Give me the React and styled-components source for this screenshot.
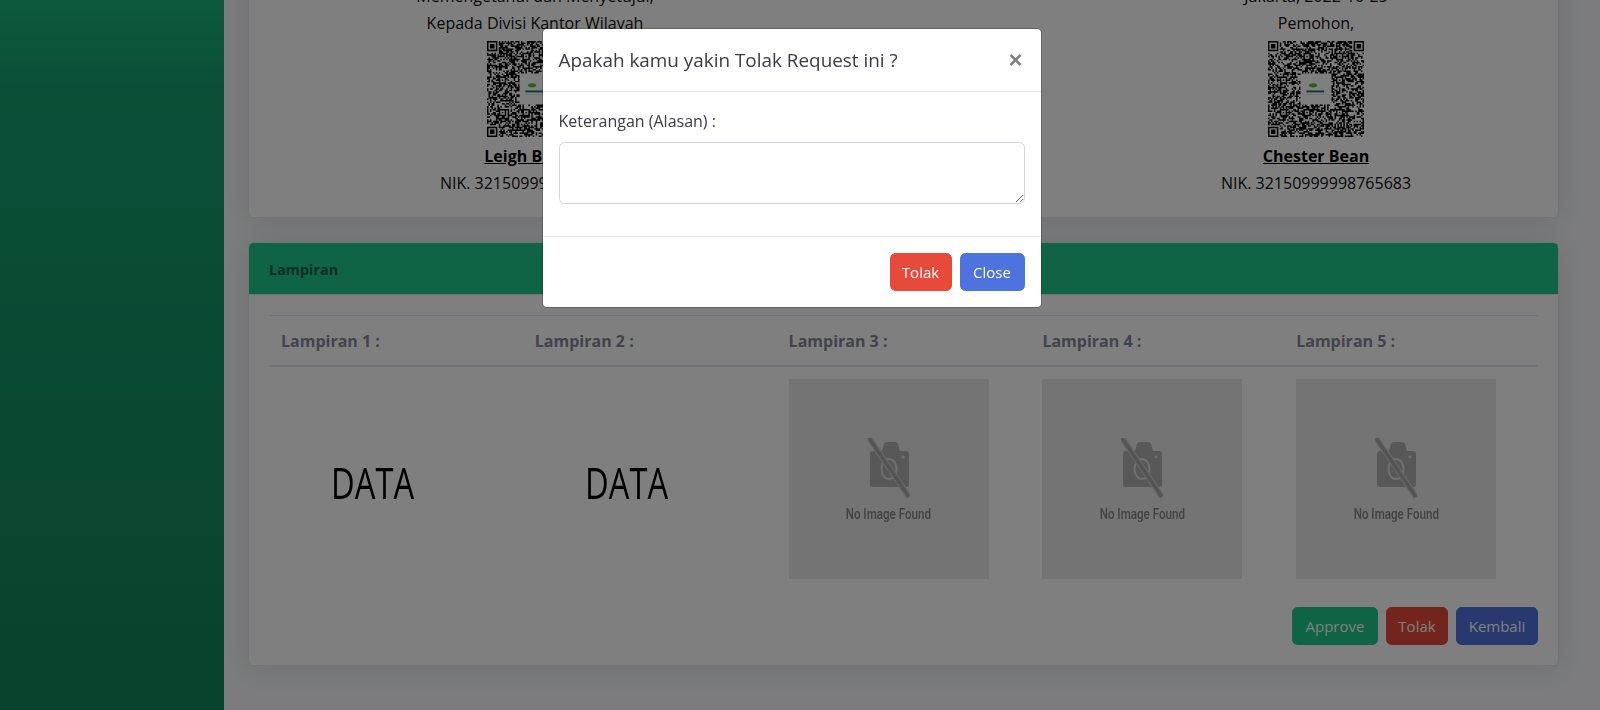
import React from "react";
import styled, { createGlobalStyle } from "styled-components";

const Global = createGlobalStyle`
  html, body { margin: 0; padding: 0; height: 710px; overflow: hidden; background: #f8f9fc; }
  body { font-family: "Open Sans", "Liberation Sans", sans-serif; font-size: 16px; color: #858796; }
  * { box-sizing: border-box; }
`;

const Page = styled.div`
  display: flex;
  height: 710px;
  padding-right: 17px;
  overflow: hidden;
`;
const Sidebar = styled.aside`
  flex: 0 0 224px;
  background-color: #18a974;
  background-image: linear-gradient(180deg, #18b47c 0%, #179f70 12%, #13845a 100%);
`;
const Content = styled.main`
  flex: 1;
  min-width: 0;
  padding: 0 24px;
  overflow: hidden;
`;
const Card = styled.section`
  background: #fff;
  border: 1px solid #e3e6f0;
  border-radius: 5.6px;
  box-shadow: 0 2.4px 28px 0 rgba(58, 59, 69, 0.15);
  margin-top: ${(p) => p.$top}px;
  overflow: hidden;
`;
const SignBody = styled.div`
  display: grid;
  grid-template-columns: 532px 1fr 444px;
  padding: 20px;
`;
const SignCol = styled.div`
  grid-column: ${(p) => p.$col};
  display: flex;
  flex-direction: column;
  align-items: center;
  color: #111;
`;
const Line = styled.div`
  line-height: 27px;
  white-space: nowrap;
`;
const SignName = styled(Line)`
  margin-top: 6px;
  font-weight: 700;
  color: #000;
  text-decoration: underline;
`;
const QrFrame = styled.svg`
  display: block;
  width: 96px;
  height: 96px;
  margin-top: 4px;
`;
const CardHeader = styled.header`
  height: 52px;
  display: flex;
  align-items: center;
  padding: 2px 20px 0;
  background: #1cc88a;
  border-bottom: 1px solid #e3e6f0;
`;
const HeaderTitle = styled.h6`
  margin: 0;
  font-size: 14.4px;
  font-weight: 700;
  color: #255a4e;
`;
const CardBody = styled.div`
  padding: 20px;
`;
const Table = styled.table`
  width: 100%;
  table-layout: fixed;
  border-collapse: separate;
  border-spacing: 0;
`;
const Th = styled.th`
  text-align: left;
  padding: 13px 12px 11px;
  line-height: 25px;
  font-weight: 700;
  font-size: 16px;
  color: #858796;
  border-top: 1px solid #e3e6f0;
  border-bottom: 2px solid #e3e6f0;
`;
const Td = styled.td`
  padding: 12px;
  vertical-align: top;
`;
const DataBox = styled.div`
  width: 200px;
  height: 200px;
  display: flex;
  align-items: center;
  justify-content: center;
  padding: 6px 16px 0 0;
  color: #000;
  background: #fff;
`;
const DataText = styled.span`
  font-size: 43px;
  line-height: 1;
  transform: scaleX(0.76);
`;
const NoImage = styled.div`
  width: 200px;
  height: 200px;
  display: flex;
  flex-direction: column;
  align-items: center;
  padding-top: 59px;
  background: #e8e8e8;
`;
const NoImageText = styled.span`
  margin-top: 8px;
  font-family: Roboto, "Liberation Sans", sans-serif;
  font-size: 14.5px;
  font-weight: 500;
  line-height: 17px;
  color: #858585;
  transform: scaleX(0.8);
  white-space: nowrap;
  filter: blur(0.3px);
`;
const Actions = styled.div`
  display: flex;
  justify-content: flex-end;
  gap: 8px;
  margin-top: 16px;
`;
const Button = styled.button`
  height: 38px;
  width: ${(p) => p.$w}px;
  padding: 0;
  font: inherit;
  font-size: 15px;
  line-height: 36px;
  color: #fff;
  background: ${(p) => p.$bg};
  border: 1px solid ${(p) => p.$bg};
  border-radius: 5.6px;
`;
const Backdrop = styled.div`
  position: fixed;
  inset: 0;
  background: rgba(0, 0, 0, 0.5);
`;
const Modal = styled.div`
  position: fixed;
  top: 28px;
  left: 541.5px;
  width: 500px;
  background: #fff;
  border: 1px solid rgba(0, 0, 0, 0.2);
  background-clip: padding-box;
  border-radius: 4.8px;
`;
const ModalHeader = styled.div`
  display: flex;
  justify-content: space-between;
  align-items: flex-start;
  padding: 16px;
  border-bottom: 1px solid #e3e6f0;
`;
const ModalTitle = styled.h5`
  margin: 0;
  font-size: 18.9px;
  font-weight: 400;
  line-height: 30px;
  color: #3a3b45;
`;
const CloseX = styled.button`
  padding: 0 2px 0 4px;
  margin: 1px 0 0;
  background: none;
  border: 0;
  font-family: "Liberation Sans", sans-serif;
  font-size: 24px;
  font-weight: 700;
  line-height: 28px;
  color: #000;
  opacity: 0.5;
`;
const ModalBody = styled.div`
  padding: 17px 16px 32px;
`;
const Label = styled.label`
  display: block;
  line-height: 24px;
  margin-bottom: 9px;
  color: #3a3b45;
`;
const TextArea = styled.textarea`
  display: block;
  width: 100%;
  height: 62px;
  padding: 6px 12px;
  border: 1px solid #d1d3e2;
  border-radius: 5.6px;
  background: #fff;
  font: inherit;
  outline: none;
`;
const ModalFooter = styled.div`
  display: flex;
  justify-content: flex-end;
  gap: 8px;
  padding: 16px;
  border-top: 1px solid #e3e6f0;
`;

function qrPath(seed) {
  const n = 65;
  const aligns = [[46, 24], [46, 46], [24, 8], [8, 24], [46, 8], [8, 46], [24, 46]];
  let s = seed;
  const rnd = () => {
    s = (s * 1664525 + 1013904223) >>> 0;
    return (s >>> 16) / 65536;
  };
  let d = "";
  const inFinder = (x, y) =>
    (x < 8 && y < 8) || (x >= n - 8 && y < 8) || (x < 8 && y >= n - 8);
  const inCenter = (x, y) => x >= 22 && x < 43 && y >= 22 && y < 43;
  const inAlign = (x, y) =>
    aligns.some(([a, b]) => x >= a && x < a + 5 && y >= b && y < b + 5);
  for (let y = 0; y < n; y++) {
    for (let x = 0; x < n; x++) {
      const v = rnd();
      if (inFinder(x, y) || inCenter(x, y) || inAlign(x, y)) continue;
      if (v > 0.48) d += `M${x} ${y}h1v1h-1z`;
    }
  }
  for (const [x, y] of [[0, 0], [n - 7, 0], [0, n - 7]]) {
    d += `M${x} ${y}h7v7h-7zM${x + 1} ${y + 1}v5h5v-5zM${x + 2} ${y + 2}h3v3h-3z`;
  }
  for (const [x, y] of aligns) {
    d += `M${x} ${y}h5v5h-5zM${x + 1} ${y + 1}v3h3v-3zM${x + 2} ${y + 2}h1v1h-1z`;
  }
  return d;
}

function Qr({ seed }) {
  return (
    <QrFrame viewBox="0 0 65 65" aria-hidden="true">
      <rect width="65" height="65" fill="#fff" />
      <path d={qrPath(seed)} fill="#000" fillRule="evenodd" />
      <ellipse cx="30.500" cy="30" rx="2.800" ry="1.400" fill="#5dbb3a" />
      <rect x="26" y="33.500" width="12" height="1.300" fill="#1c6f6a" />
      <rect x="26" y="36" width="12" height="0.400" fill="#cfe0cf" />
    </QrFrame>
  );
}

function NoImageIcon() {
  return (
    <svg width="42" height="60" viewBox="0 0 42 60" aria-hidden="true">
      <path
        d="M5 13h9l2-7q.6-2 3-2h8q2.400 0 3 2l2 7h6q3 0 3 3v30q0 3-3 3H5q-3 0-3-3V16q0-3 3-3z"
        fill="#b0b0b0"
      />
      <ellipse cx="21" cy="31" rx="7.500" ry="10" fill="none" stroke="#e0e0e0" strokeWidth="2" />
      <circle cx="35" cy="19" r="1.600" fill="#e0e0e0" />
      <line x1="1" y1="0" x2="41" y2="59" stroke="#d0d0d0" strokeWidth="6" />
      <line x1="1" y1="0" x2="41" y2="59" stroke="#a8a8a8" strokeWidth="3.500" />
    </svg>
  );
}

const heads = ["Lampiran 1 :", "Lampiran 2 :", "Lampiran 3 :", "Lampiran 4 :", "Lampiran 5 :"];

export default function App() {
  return (
    <>
      <Global />
      <Page>
        <Sidebar />
        <Content>
          <Card $top={-38}>
            <SignBody>
              <SignCol $col={1}>
                <Line>Memengetahui dan Menyetujui,</Line>
                <Line>Kepada Divisi Kantor Wilayah</Line>
                <Qr seed={77} />
                <SignName>Leigh Bowen</SignName>
                <Line>NIK. 32150999998765683</Line>
              </SignCol>
              <SignCol $col={3}>
                <Line>Jakarta, 2022-10-25</Line>
                <Line>Pemohon,</Line>
                <Qr seed={4242} />
                <SignName>Chester Bean</SignName>
                <Line>NIK. 32150999998765683</Line>
              </SignCol>
            </SignBody>
          </Card>
          <Card $top={24}>
            <CardHeader>
              <HeaderTitle>Lampiran</HeaderTitle>
            </CardHeader>
            <CardBody>
              <Table>
                <thead>
                  <tr>
                    {heads.map((h) => (
                      <Th key={h}>{h}</Th>
                    ))}
                  </tr>
                </thead>
                <tbody>
                  <tr>
                    {[0, 1].map((i) => (
                      <Td key={i}>
                        <DataBox>
                          <DataText>DATA</DataText>
                        </DataBox>
                      </Td>
                    ))}
                    {[0, 1, 2].map((i) => (
                      <Td key={i}>
                        <NoImage>
                          <NoImageIcon />
                          <NoImageText>No Image Found</NoImageText>
                        </NoImage>
                      </Td>
                    ))}
                  </tr>
                </tbody>
              </Table>
              <Actions>
                <Button $w={86} $bg="#1cc88a">Approve</Button>
                <Button $w={62} $bg="#e74a3b">Tolak</Button>
                <Button $w={82} $bg="#4e73df">Kembali</Button>
              </Actions>
            </CardBody>
          </Card>
        </Content>
      </Page>
      <Backdrop />
      <Modal>
        <ModalHeader>
          <ModalTitle>Apakah kamu yakin Tolak Request ini ?</ModalTitle>
          <CloseX>×</CloseX>
        </ModalHeader>
        <ModalBody>
          <Label>Keterangan (Alasan) :</Label>
          <TextArea />
        </ModalBody>
        <ModalFooter>
          <Button $w={62} $bg="#e74a3b">Tolak</Button>
          <Button $w={65} $bg="#4e73df">Close</Button>
        </ModalFooter>
      </Modal>
    </>
  );
}
